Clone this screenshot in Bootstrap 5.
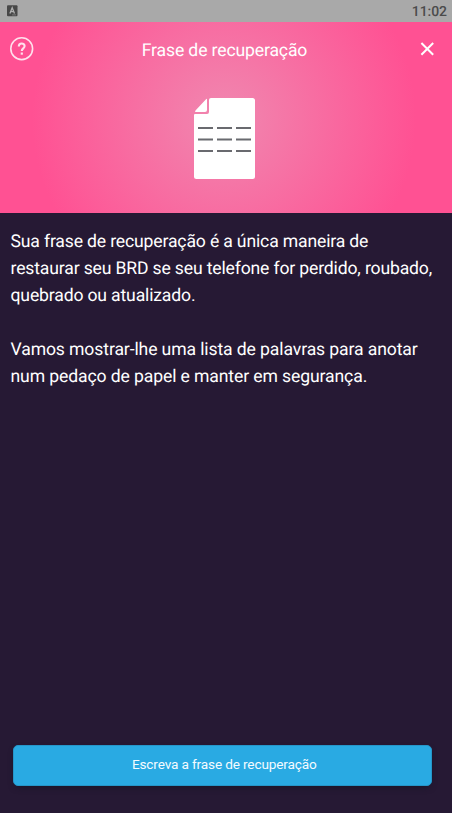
<!DOCTYPE html>
<html lang="pt">
<head>
<meta charset="utf-8">
<meta name="viewport" content="width=device-width, initial-scale=1">
<title>Frase de recuperação</title>
<link href="https://cdn.jsdelivr.net/npm/bootstrap@5.3.0/dist/css/bootstrap.min.css" rel="stylesheet">
<style>
body{font-family:Roboto,sans-serif;background:#261934;height:813px;overflow:hidden;text-rendering:geometricPrecision}
.status-strip{height:22px;background:#a9a9a9;padding:0 5px 0 7px;color:#4b4b4b;font-size:14px;font-weight:500;line-height:22px;letter-spacing:-.05px}
.status-strip span{padding-top:1px}
.hero{height:191px;background:radial-gradient(circle 192px at 224px 97px,#f088b0 0%,#ff5193 100%)}
.hero-bar{height:54px;padding:0 17px 0 9px}
.hero-title{font-size:17.6px;letter-spacing:-.14px;font-weight:400;line-height:26px;padding-top:3px;padding-right:5px}
.icon-btn{line-height:0}
.doc-icon{margin-top:21px;margin-right:4px}
.copy{font-size:17.6px;letter-spacing:-.16px;line-height:26.9px;padding:16px 10px 0 10.5px;white-space:nowrap}
.copy p{margin-bottom:26.9px}
.copy p + p{letter-spacing:-.12px}
.action{padding:0 20px 27px 13px}
.action .btn{--bs-btn-bg:#29aae3;--bs-btn-border-color:#2596c9;--bs-btn-color:#f4fbff;height:41px;border-radius:5px;font-size:13.6px;letter-spacing:-.14px;line-height:20px;padding:8px 0 11px 3.5px;box-shadow:0 3px 7px -3px #101522}
</style>
</head>
<body class="d-flex flex-column text-white">
<div class="status-strip d-flex justify-content-between align-items-center flex-shrink-0">
  <svg width="11" height="12" viewBox="0 0 11 12" aria-hidden="true"><rect y="0.3" width="10.5" height="11" rx="1" fill="#484848"/><path d="M2.9 8.5 5.2 2.7 7.5 8.5M3.8 6.7H6.7" fill="none" stroke="#b0b0b0" stroke-width="1.3"/><path d="M5 9.9H9" stroke="#858585" stroke-width=".8"/></svg>
  <span>11:02</span>
</div>
<header class="hero flex-shrink-0">
  <div class="hero-bar d-flex align-items-center justify-content-between">
    <button class="icon-btn btn p-0 border-0" aria-label="Ajuda">
      <svg width="25" height="25" viewBox="0 0 25 25" fill="none" stroke="#ffe1ed"><circle cx="12.7" cy="11.7" r="10.9" stroke-width="1.6"/><path d="M9.8 9.4C9.8 5.5 15.6 5.6 15.6 9.1C15.6 11.4 12.8 11.3 12.8 13.9" stroke-width="2.1"/><path d="M11.7 16.6H13.9" stroke-width="2.2"/></svg>
    </button>
    <h1 class="hero-title mb-0">Frase de recuperação</h1>
    <button class="icon-btn btn p-0 border-0" aria-label="Fechar">
      <svg width="15" height="15" viewBox="0 0 15 15"><path d="M1.4 1 13.2 12.8M13.2 1 1.4 12.8" stroke="#fff" stroke-width="2"/></svg>
    </button>
  </div>
  <div class="doc-icon text-center lh-1">
    <svg width="61" height="82" viewBox="0 0 61 82"><path d="M17 1H58.5Q61 1 61 3.5V79.5Q61 82 58.5 82H2.5Q0 82 0 79.5V18Q0 17 1 17H13Q15 17 15 15V3Q15 1 17 1Z" fill="#fff"/><path d="M13 2V13Q13 15 11 15H1.5Q.5 14.5 1.5 13.5L11.8 2.5Q13 1.2 13 2Z" fill="#fff"/><path d="M4 31H19M23 31H38M42 31H57M4 42.5H19M23 42.5H38M42 42.5H57M4 54H19M23 54H38M42 54H57" stroke="#696a6f" stroke-width="2"/></svg>
  </div>
</header>
<main class="copy flex-grow-1">
  <p>Sua frase de recuperação é a única maneira de<br>restaurar seu BRD se seu telefone for perdido, roubado,<br>quebrado ou atualizado.</p>
  <p>Vamos mostrar-lhe uma lista de palavras para anotar<br>num pedaço de papel e manter em segurança.</p>
</main>
<footer class="action"><button class="btn w-100 d-block">Escreva a frase de recuperação</button></footer>
<script src="https://cdn.jsdelivr.net/npm/bootstrap@5.3.0/dist/js/bootstrap.bundle.min.js"></script>
</body>
</html>
